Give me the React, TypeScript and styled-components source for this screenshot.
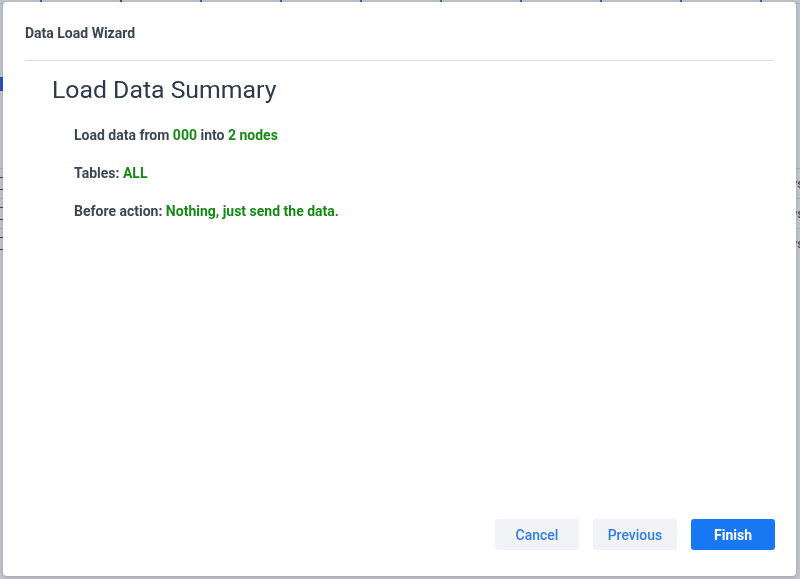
import React from 'react';
import styled, { createGlobalStyle } from 'styled-components';

const GlobalStyle = createGlobalStyle`
  html, body {
    margin: 0;
    padding: 0;
    height: 100%;
    background: #ffffff;
    font-family: Roboto, "Liberation Sans", Arial, sans-serif;
  }
  #root {
    height: 100%;
  }
`;

// page that sits behind the dialog, mostly hidden
const Page = styled.div`
  height: 100%;
  display: flex;
  flex-direction: column;
  overflow: hidden;
`;

const PageNav = styled.div`
  display: flex;
  gap: 78px;
  height: 3px;
  padding-left: 40px;
  border-bottom: 1px solid #dfe3e8;
`;

const NavTick = styled.span<{ $color: string }>`
  width: 2px;
  height: 3px;
  background: ${(p) => p.$color};
`;

const PageTitle = styled.div`
  margin: 73px 0 0 0;
  height: 14px;
  border-left: 4px solid #2d5be3;
`;

const PageTable = styled.div`
  margin-top: 77px;
  display: flex;
  flex-direction: column;
`;

const PageRow = styled.div`
  display: flex;
  align-items: center;
  justify-content: space-between;
  height: 29px;
  border-top: 1px solid #e3e6ea;
  font-size: 13px;
  color: #5a4030;
`;

const RowBox = styled.span`
  width: 10px;
  height: 11px;
  margin-left: -6px;
  border: 1.5px solid #6b3a3a;
  border-radius: 3px;
`;

const RowEnd = styled.span`
  margin-right: -4px;
`;

const Backdrop = styled.div`
  position: fixed;
  inset: 0;
  background: rgba(48, 62, 84, 0.3);
  display: flex;
  padding: 2px 4px 3px 3px;
  box-sizing: border-box;
`;

const Dialog = styled.div`
  flex: 1;
  background: #ffffff;
  border-radius: 4px;
  box-shadow: 0 1px 4px rgba(20, 30, 50, 0.2);
  display: flex;
  flex-direction: column;
  padding: 0 21px 26px 21px;
`;

const DialogHeader = styled.div`
  padding: 21px 0 17px 0;
  border-bottom: 1px solid #dcdfe3;
  margin: 0 1px;
`;

const DialogTitle = styled.h1`
  margin: 0;
  font-size: 14px;
  line-height: 20px;
  font-weight: 700;
  color: #3b4452;
`;

const DialogBody = styled.div`
  flex: 1;
  padding: 13px 0 0 28px;
`;

const Heading = styled.h2`
  margin: 0 0 20px 0;
  font-size: 24.8px;
  line-height: 32px;
  font-weight: 400;
  color: #2c3a4d;
`;

const SummaryList = styled.div`
  display: flex;
  flex-direction: column;
  gap: 20px;
  padding-left: 22px;
`;

const SummaryLine = styled.p`
  margin: 0;
  font-size: 14px;
  line-height: 18px;
  font-weight: 700;
  color: #3d4655;
`;

const Value = styled.span`
  color: #168a16;
`;

const Footer = styled.div`
  display: flex;
  justify-content: flex-end;
  gap: 14px;
`;

const Button = styled.button<{ $primary?: boolean }>`
  width: 84px;
  height: 31px;
  border: none;
  border-radius: 3px;
  font-family: inherit;
  font-size: 14px;
  font-weight: ${(p) => (p.$primary ? 700 : 500)};
  cursor: pointer;
  background: ${(p) => (p.$primary ? '#1877f2' : '#f1f3f6')};
  color: ${(p) => (p.$primary ? '#ffffff' : '#2f7de6')};
`;

const ticks = ['#3a6fd8', '#c03030', '#3a6fd8', '#3a6fd8', '#3a6fd8', '#30a030', '#3a6fd8', '#3a6fd8', '#3a6fd8', '#3a6fd8'];
const rows = ['Ready', 'Ready', 'Ready'];

export default function App() {
  return (
    <>
      <GlobalStyle />
      <Page>
        <PageNav>
          {ticks.map((c, ix) => (
            <NavTick key={`tick-${ix}`} $color={c} />
          ))}
        </PageNav>
        <PageTitle />
        <PageTable>
          {rows.map((x, ix) => (
            <PageRow key={`row-${ix}`}>
              <RowBox />
              <RowEnd>{x}s</RowEnd>
            </PageRow>
          ))}
        </PageTable>
      </Page>
      <Backdrop>
        <Dialog>
          <DialogHeader>
            <DialogTitle>Data Load Wizard</DialogTitle>
          </DialogHeader>
          <DialogBody>
            <Heading>Load Data Summary</Heading>
            <SummaryList>
              <SummaryLine>
                Load data from <Value>000</Value> into <Value>2 nodes</Value>
              </SummaryLine>
              <SummaryLine>
                Tables: <Value>ALL</Value>
              </SummaryLine>
              <SummaryLine>
                Before action: <Value>Nothing, just send the data.</Value>
              </SummaryLine>
            </SummaryList>
          </DialogBody>
          <Footer>
            <Button>Cancel</Button>
            <Button>Previous</Button>
            <Button $primary>Finish</Button>
          </Footer>
        </Dialog>
      </Backdrop>
    </>
  );
}
